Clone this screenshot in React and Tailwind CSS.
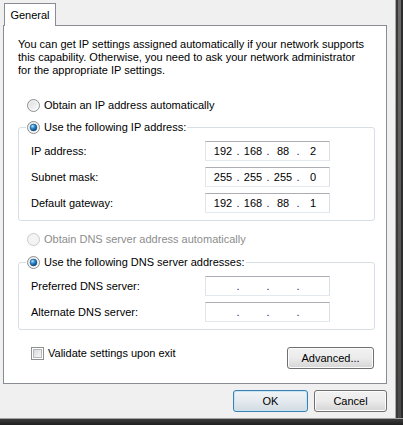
import React from "react";

function Radio({ checked = false, disabled = false }) {
  return (
    <svg width="13" height="13" viewBox="0 0 13 13" className="shrink-0">
      <defs>
        <linearGradient id="rbg" x1="0" y1="0" x2="1" y2="1">
          <stop offset="0" stopColor="#d9dcdf" />
          <stop offset="1" stopColor="#fbfbfb" />
        </linearGradient>
        <radialGradient id="rdot" cx="0.35" cy="0.3" r="0.75">
          <stop offset="0" stopColor="#b6e6ff" />
          <stop offset="0.45" stopColor="#2d8bd0" />
          <stop offset="1" stopColor="#0b3f73" />
        </radialGradient>
      </defs>
      <circle
        cx="6.5"
        cy="6.5"
        r="6"
        fill={disabled ? "#f4f4f4" : "url(#rbg)"}
        stroke={disabled ? "#c9c9c9" : "#8e8f8f"}
      />
      <circle cx="6.5" cy="6.5" r="4.6" fill="none" stroke={disabled ? "#f0f0f0" : "#ffffff"} strokeOpacity="0.6" />
      {checked && <circle cx="6.5" cy="6.5" r="3.4" fill="url(#rdot)" stroke="#1b4b7a" strokeWidth="0.6" />}
    </svg>
  );
}

function Checkbox() {
  return (
    <div className="flex h-[13px] w-[13px] shrink-0 items-center justify-center border border-[#8e8f8f] bg-white">
      <div className="h-[9px] w-[9px] border border-[#b4b8bd] bg-linear-to-br from-[#d6d9dd] to-[#f7f7f7]" />
    </div>
  );
}

function IpField({ value }) {
  const parts = value ? value.split(".") : ["", "", "", ""];
  return (
    <div className="flex h-[20px] w-[125px] items-center border border-[#abadb3] border-t-[#abadb3] border-l-[#e2e3ea] border-r-[#dbdfe6] border-b-[#e3e9ef] bg-white pl-[4px]">
      {parts.map((p, i) => (
        <React.Fragment key={i}>
          <span className="w-[26px] text-center">{p}</span>
          {i < 3 && <span className="w-[4px] text-center text-[#1a1a5a]">.</span>}
        </React.Fragment>
      ))}
    </div>
  );
}

function Row({ label, value }) {
  return (
    <div className="flex items-center">
      <div className="w-[186px] pl-[12px]">{label}</div>
      <IpField value={value} />
    </div>
  );
}

function Group({ title, children }) {
  return (
    <div>
      <div className="relative z-10 ml-[8px] flex h-[16px] w-fit items-center gap-[4px] bg-white px-[1px]">
        <Radio checked />
        <span>{title}</span>
      </div>
      <div className="-mt-[8px] flex flex-col gap-[6px] rounded-[3px] border border-[#d5dfe5] pt-[13px] pb-[7px]">
        {children}
      </div>
    </div>
  );
}

function WinButton({ children, primary, className = "" }) {
  return (
    <button
      className={
        "flex h-[22px] items-center justify-center rounded-[3px] border text-black " +
        (primary
          ? "border-[#3c7fb1] bg-linear-to-b from-[#f1f4f6] via-[#e4eaee] to-[#d2dbe2] shadow-[inset_0_0_0_1px_#c4e5f6] "
          : "border-[#707070] bg-linear-to-b from-[#f2f2f2] via-[#ebebeb] to-[#d5d5d5] shadow-[inset_0_0_0_1px_#fcfcfc] ") +
        className
      }
    >
      {children}
    </button>
  );
}

export default function App() {
  return (
    <div className="flex h-[425px] w-[403px] flex-col overflow-hidden bg-[#f0f0f0] font-['Liberation_Sans',Arial,sans-serif] text-[11px] leading-[13px] text-black">
      <div className="flex h-[418px]">
        <div className="flex w-[395px] flex-col pt-[3px] pl-[3px]">
          <div className="relative z-10 ml-[1px] flex h-[23px] w-[52px] items-center justify-center border border-b-0 border-[#898c95] bg-white">
            General
          </div>
          <div className="-mt-px flex h-[359px] w-[384px] flex-col border border-[#898c95] bg-white pt-[12px] pr-[11px] pl-[14px]">
            <p className="whitespace-nowrap">
              You can get IP settings assigned automatically if your network supports
              <br />
              this capability. Otherwise, you need to ask your network administrator
              <br />
              for the appropriate IP settings.
            </p>

            <div className="mt-[20px] ml-[9px] flex h-[16px] items-center gap-[4px]">
              <Radio />
              <span>Obtain an IP address automatically</span>
            </div>

            <div className="mt-[6px]">
              <Group title="Use the following IP address:">
                <Row label="IP address:" value="192.168.88.2" />
                <Row label="Subnet mask:" value="255.255.255.0" />
                <Row label="Default gateway:" value="192.168.88.1" />
              </Group>
            </div>

            <div className="mt-[10px] ml-[9px] flex h-[16px] items-center gap-[4px] text-[#8d8d8d]">
              <Radio disabled />
              <span>Obtain DNS server address automatically</span>
            </div>

            <div className="mt-[7px]">
              <Group title="Use the following DNS server addresses:">
                <Row label="Preferred DNS server:" />
                <Row label="Alternate DNS server:" />
              </Group>
            </div>

            <div className="mt-[17px] flex items-start justify-between">
              <div className="ml-[13px] flex h-[13px] items-center gap-[4px]">
                <Checkbox />
                <span>Validate settings upon exit</span>
              </div>
              <WinButton className="mr-[1px] w-[87px]">Advanced...</WinButton>
            </div>
          </div>

          <div className="mt-[6px] flex justify-end gap-[6px] pr-[8px]">
            <WinButton primary className="w-[75px]">OK</WinButton>
            <WinButton className="w-[73px]">Cancel</WinButton>
          </div>
        </div>

        <div className="flex w-[8px]">
          <div className="w-px bg-[#a9a9a9]" />
          <div className="w-[2px] bg-[#3a3a3a]" />
          <div className="w-[3px] bg-linear-to-b from-[#6f6a6a] to-[#4a4747]" />
          <div className="w-[2px] bg-[#2d2d2d]" />
        </div>
      </div>
      <div className="h-[7px] border-t border-[#a3a3a3] bg-linear-to-b from-[#3d3d3d] to-[#1f1f1f]" />
    </div>
  );
}
